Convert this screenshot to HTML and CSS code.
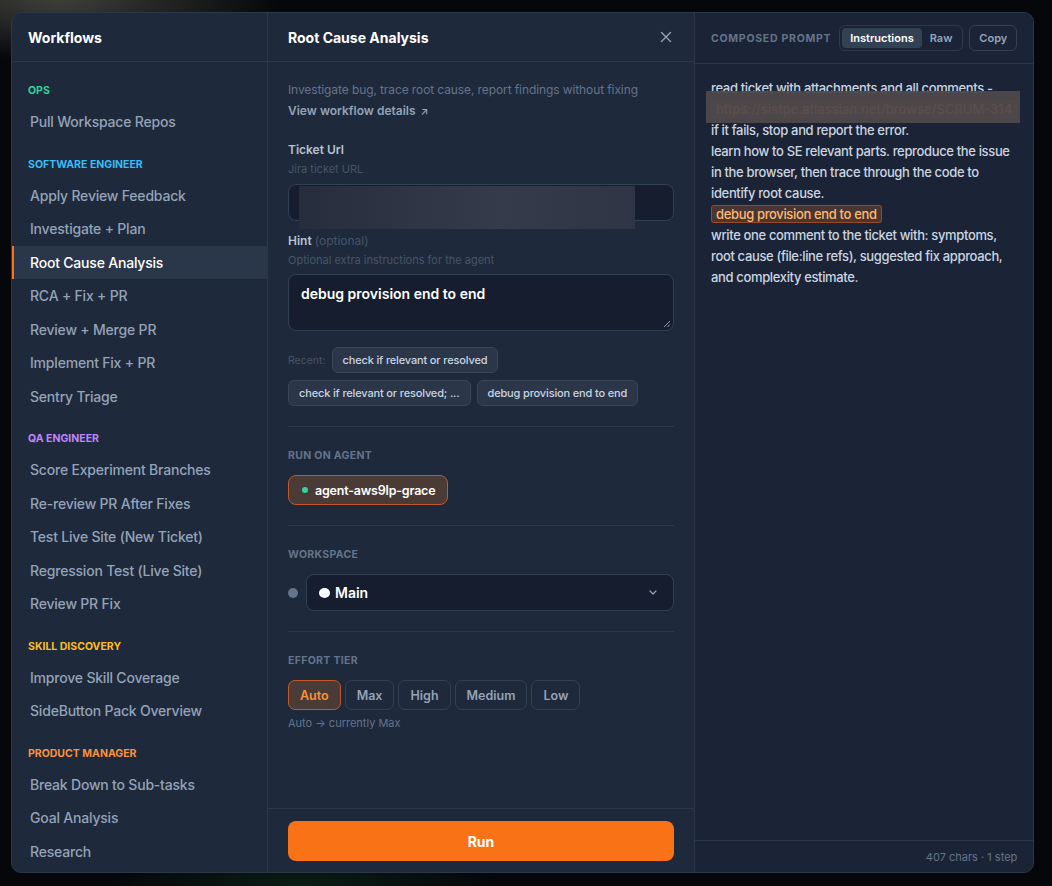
FILE: index.html
```html
<!DOCTYPE html>
<html lang="en">
<head>
    <meta charset="UTF-8">
    <meta name="viewport" content="width=device-width, initial-scale=1.0">
    <title>Workflows - Root Cause Analysis</title>
    <link rel="stylesheet" href="styles.css">
</head>
<body>

<div class="modal">

    <aside class="sidebar">
        <div class="sidebar-header">
            <h2>Workflows</h2>
        </div>
        <div class="sidebar-list">
            <div class="group">
                <div class="group-label ops">OPS</div>
                <div class="item">Pull Workspace Repos</div>
            </div>
            <div class="group">
                <div class="group-label swe">SOFTWARE ENGINEER</div>
                <div class="item">Apply Review Feedback</div>
                <div class="item">Investigate + Plan</div>
                <div class="item active">Root Cause Analysis</div>
                <div class="item">RCA + Fix + PR</div>
                <div class="item">Review + Merge PR</div>
                <div class="item">Implement Fix + PR</div>
                <div class="item">Sentry Triage</div>
            </div>
            <div class="group">
                <div class="group-label qa">QA ENGINEER</div>
                <div class="item">Score Experiment Branches</div>
                <div class="item">Re-review PR After Fixes</div>
                <div class="item">Test Live Site (New Ticket)</div>
                <div class="item">Regression Test (Live Site)</div>
                <div class="item">Review PR Fix</div>
            </div>
            <div class="group">
                <div class="group-label skill">SKILL DISCOVERY</div>
                <div class="item">Improve Skill Coverage</div>
                <div class="item">SideButton Pack Overview</div>
            </div>
            <div class="group">
                <div class="group-label pm">PRODUCT MANAGER</div>
                <div class="item">Break Down to Sub-tasks</div>
                <div class="item">Goal Analysis</div>
                <div class="item">Research</div>
            </div>
        </div>
    </aside>

    <main class="detail">
        <div class="detail-header">
            <h2>Root Cause Analysis</h2>
            <button class="close-btn" aria-label="Close">
                <svg width="12" height="12" viewBox="0 0 12 12"><path d="M1.5 1.5l9 9M10.5 1.5l-9 9" stroke="#94a3b8" stroke-width="1.4" stroke-linecap="round"/></svg>
            </button>
        </div>

        <div class="detail-body">
            <p class="desc">Investigate bug, trace root cause, report findings without fixing</p>
            <a class="details-link">View workflow details <span class="ext">↗</span></a>

            <div class="field">
                <div class="field-label">Ticket Url</div>
                <div class="field-help">Jira ticket URL</div>
                <div class="input">
                    <span class="redacted">https://sistpe.atlassian.net/browse/SCRUM-314</span>
                </div>
            </div>

            <div class="field">
                <div class="field-label">Hint <span class="optional">(optional)</span></div>
                <div class="field-help">Optional extra instructions for the agent</div>
                <div class="textarea">debug provision end to end
                    <svg class="grip" width="8" height="8" viewBox="0 0 8 8"><path d="M7 1L1 7M7 4.5L4.5 7" stroke="#94a3b8" stroke-width="1"/></svg>
                </div>
            </div>

            <div class="recent">
                <span class="recent-label">Recent:</span>
                <button class="chip">check if relevant or resolved</button>
                <button class="chip">check if relevant or resolved; ...</button>
                <button class="chip">debug provision end to end</button>
            </div>

            <div class="section">
                <div class="section-title">RUN ON AGENT</div>
                <button class="agent-chip"><span class="dot-green"></span>agent-aws9lp-grace</button>
            </div>

            <div class="section">
                <div class="section-title">WORKSPACE</div>
                <div class="workspace-row">
                    <span class="dot-gray"></span>
                    <div class="select">
                        <span class="dot-white"></span>
                        <span class="select-value">Main</span>
                        <svg class="chevron" width="8" height="5" viewBox="0 0 8 5"><path d="M1 1l3 3 3-3" fill="none" stroke="#94a3b8" stroke-width="1.2" stroke-linecap="round" stroke-linejoin="round"/></svg>
                    </div>
                </div>
            </div>

            <div class="section">
                <div class="section-title">EFFORT TIER</div>
                <div class="tiers">
                    <button class="tier active">Auto</button>
                    <button class="tier">Max</button>
                    <button class="tier">High</button>
                    <button class="tier">Medium</button>
                    <button class="tier">Low</button>
                </div>
                <div class="tier-note">Auto → currently Max</div>
            </div>
        </div>

        <div class="detail-footer">
            <button class="run-btn">Run</button>
        </div>
    </main>

    <section class="prompt">
        <div class="prompt-header">
            <span class="prompt-title">COMPOSED PROMPT</span>
            <div class="prompt-actions">
                <div class="toggle">
                    <button class="toggle-btn active">Instructions</button>
                    <button class="toggle-btn">Raw</button>
                </div>
                <button class="copy-btn">Copy</button>
            </div>
        </div>
        <div class="prompt-body">read ticket with attachments and all comments -
<span class="var-chip link-chip">https://sistpe.atlassian.net/browse/SCRUM-314</span>
if it fails, stop and report the error.
learn how to SE relevant parts. reproduce the issue in the browser, then trace through the code to identify root cause.
<span class="var-chip">debug provision end to end</span>
write one comment to the ticket with: symptoms, root cause (file:line refs), suggested fix approach, and complexity estimate.</div>
        <div class="prompt-footer">407 chars · 1 step</div>
    </section>

</div>

</body>
</html>
```

FILE: styles.css
```css
/* Ciemny motyw modala z workflowami */
body {
    margin: 0;
    height: 886px;
    overflow: hidden;
    font-family: 'Inter', 'Noto Sans', sans-serif;
    background-color: #05070a;
    background-image:
        radial-gradient(ellipse 220px 60px at 60px 0px, rgba(110, 108, 96, 0.55), transparent),
        radial-gradient(ellipse 200px 40px at 300px 886px, rgba(20, 70, 40, 0.35), transparent);
    color: #cbd5e1;
}

button {
    font-family: inherit;
    cursor: pointer;
}

.modal {
    margin: 12px 0 0 11px;
    width: 1023px;
    height: 861px;
    box-sizing: border-box;
    display: flex;
    background-color: #1e293b;
    border: 1px solid #2c3749;
    border-radius: 10px;
    overflow: hidden;
}

/* Lewa kolumna */
.sidebar {
    width: 256px;
    flex-shrink: 0;
    box-sizing: border-box;
    border-right: 1px solid #2c3749;
    display: flex;
    flex-direction: column;
}

.sidebar-header {
    height: 49px;
    box-sizing: border-box;
    border-bottom: 1px solid #2c3749;
    display: flex;
    align-items: center;
    padding-left: 16px;
}

.sidebar-header h2,
.detail-header h2 {
    margin: 0;
    font-size: 14px;
    font-weight: 700;
    color: #fff;
}

.sidebar-list {
    padding-top: 22px;
}

.group + .group {
    margin-top: 18.75px;
}

.group-label {
    padding-left: 16px;
    font-size: 10.5px;
    line-height: 14px;
    font-weight: 700;
    margin-bottom: 7.25px;
}

.group-label.ops { color: #34d399; }
.group-label.swe { color: #38bdf8; }
.group-label.qa { color: #c084fc; }
.group-label.skill { color: #fbbf24; }
.group-label.pm { color: #fb923c; }

.item {
    padding: 8px 0 8px 16px;
    line-height: 17.5px;
    font-size: 14px;
    font-weight: 500;
    letter-spacing: -0.2px;
    color: #94a3b8;
    border-left: 2px solid transparent;
}

.item.active {
    background-color: #2a3649;
    border-left-color: #f97316;
    color: #fff;
}

/* Srodkowa kolumna */
.detail {
    width: 427px;
    flex-shrink: 0;
    box-sizing: border-box;
    border-right: 1px solid #2c3749;
    display: flex;
    flex-direction: column;
}

.detail-header {
    height: 49px;
    box-sizing: border-box;
    border-bottom: 1px solid #2c3749;
    display: flex;
    align-items: center;
    justify-content: space-between;
    padding: 0 20px;
}

.close-btn {
    background: none;
    border: none;
    padding: 0;
    margin-right: 2px;
    display: flex;
}

.detail-body {
    flex: 1;
    padding: 19px 20px 0;
}

.desc {
    margin: 0;
    font-size: 12px;
    line-height: 18px;
    letter-spacing: -0.1px;
    color: #64748b;
}

.details-link {
    display: block;
    margin-top: 3px;
    font-size: 12px;
    line-height: 18px;
    font-weight: 600;
    color: #94a3b8;
}

.details-link .ext {
    font-size: 10px;
    margin-left: 2px;
}

.field {
    margin-top: 21px;
}

.field + .field {
    margin-top: 11px;
}

.field-label {
    font-size: 12px;
    line-height: 18px;
    font-weight: 600;
    color: #b8c2d0;
}

.optional {
    font-weight: 400;
    color: #475569;
}

.field-help {
    margin-top: 3px;
    font-size: 11px;
    line-height: 14px;
    color: #475569;
}

.input {
    margin-top: 8px;
    height: 37px;
    box-sizing: border-box;
    background-color: #151d2e;
    border: 1px solid #334155;
    border-radius: 8px;
    padding: 0 10px;
    display: flex;
    align-items: center;
}

.redacted {
    position: relative;
    font-size: 14px;
    color: #64748b;
}

.redacted::after {
    content: '';
    position: absolute;
    left: 0;
    top: -8px;
    width: 336px;
    height: 43px;
    background: linear-gradient(90deg, #262d3c 0%, #2e3444 30%, #363b4b 60%, #2f3545 100%);
}

.textarea {
    position: relative;
    margin-top: 7px;
    height: 57px;
    box-sizing: border-box;
    background-color: #151d2e;
    border: 1px solid #334155;
    border-radius: 8px;
    padding: 9px 12px;
    font-size: 14px;
    line-height: 20px;
    font-weight: 600;
    color: #fff;
}

.grip {
    position: absolute;
    right: 2px;
    bottom: 2px;
}

.recent {
    margin-top: 16px;
    display: flex;
    flex-wrap: wrap;
    align-items: center;
    gap: 7px 6px;
}

.recent-label {
    font-size: 10.5px;
    color: #475569;
}

.chip {
    height: 26px;
    padding: 0 10px;
    background-color: #2b3749;
    border: 1px solid #3a4659;
    border-radius: 6px;
    font-size: 11px;
    font-weight: 500;
    letter-spacing: -0.15px;
    color: #cbd5e1;
}

.section {
    margin-top: 20px;
    border-top: 1px solid #2c3749;
    padding-top: 22px;
}

.section-title {
    font-size: 10.5px;
    line-height: 14px;
    font-weight: 700;
    letter-spacing: 0.03em;
    color: #64748b;
    margin-bottom: 12px;
}

.agent-chip {
    height: 30px;
    padding: 0 12px 0 13px;
    display: flex;
    align-items: center;
    gap: 7px;
    background-color: #4a3b36;
    border: 1px solid #c2592a;
    border-radius: 8px;
    font-size: 12.5px;
    font-weight: 600;
    letter-spacing: -0.2px;
    color: #fff;
}

.dot-green {
    width: 6px;
    height: 6px;
    border-radius: 50%;
    background-color: #34d399;
}

.workspace-row {
    display: flex;
    align-items: center;
    gap: 8px;
}

.dot-gray {
    width: 10px;
    height: 10px;
    border-radius: 50%;
    background-color: #64748b;
    flex-shrink: 0;
}

.select {
    flex: 1;
    height: 37px;
    box-sizing: border-box;
    background-color: #151d2e;
    border: 1px solid #334155;
    border-radius: 8px;
    display: flex;
    align-items: center;
    padding: 0 16px 0 12px;
}

.dot-white {
    width: 11px;
    height: 10px;
    border-radius: 50%;
    background-color: #fff;
    margin-right: 5px;
}

.select-value {
    flex: 1;
    font-size: 14px;
    font-weight: 600;
    color: #fff;
}

.tiers {
    display: flex;
    gap: 4px;
}

.tier {
    height: 30px;
    padding: 0 11px;
    background: none;
    border: 1px solid #334155;
    border-radius: 7px;
    font-size: 12.5px;
    font-weight: 600;
    color: #94a3b8;
}

.tier.active {
    background-color: #4a3b36;
    border-color: #c2592a;
    color: #fb923c;
}

.tier-note {
    margin-top: 6px;
    font-size: 11px;
    line-height: 14px;
    color: #64748b;
}

.detail-footer {
    border-top: 1px solid #2c3749;
    padding: 12px 20px 11px;
}

.run-btn {
    width: 100%;
    height: 40px;
    border: none;
    border-radius: 8px;
    background-color: #f97316;
    color: #fff;
    font-size: 14px;
    font-weight: 700;
}

/* Prawa kolumna */
.prompt {
    flex: 1;
    display: flex;
    flex-direction: column;
    background-color: #1b2436;
}

.prompt-header {
    height: 51px;
    box-sizing: border-box;
    border-bottom: 1px solid #2c3749;
    display: flex;
    align-items: center;
    justify-content: space-between;
    padding: 0 16px;
}

.prompt-title {
    font-size: 10.5px;
    font-weight: 700;
    letter-spacing: 0.07em;
    color: #64748b;
}

.prompt-actions {
    display: flex;
    gap: 6px;
}

.toggle {
    display: flex;
    padding: 2px;
    border: 1px solid #2d3a4e;
    border-radius: 6px;
}

.toggle-btn {
    height: 20px;
    padding: 0 8px;
    background: none;
    border: none;
    border-radius: 4px;
    font-size: 11px;
    font-weight: 600;
    color: #94a3b8;
}

.toggle-btn.active {
    background-color: #334155;
    color: #fff;
}

.copy-btn {
    height: 26px;
    padding: 0 9px;
    background: none;
    border: 1px solid #334155;
    border-radius: 6px;
    font-size: 11px;
    font-weight: 600;
    color: #94a3b8;
}

.prompt-body {
    flex: 1;
    padding: 14px 16px 13px;
    white-space: pre-wrap;
    font-size: 13px;
    line-height: 21px;
    font-weight: 500;
    letter-spacing: -0.35px;
    color: #cbd5e1;
}

.var-chip {
    padding: 0 4px;
    background-color: #4a3530;
    border: 1px solid #9a4b25;
    border-radius: 3px;
    color: #fdba74;
}

.link-chip {
    position: relative;
    white-space: nowrap;
    letter-spacing: 0;
}

.link-chip::after {
    content: '';
    position: absolute;
    left: -6px;
    width: 314px;
    top: -10px;
    bottom: -6px;
    background-color: rgba(78, 72, 74, 0.94);
}

.prompt-footer {
    height: 32px;
    box-sizing: border-box;
    border-top: 1px solid #2c3749;
    display: flex;
    align-items: center;
    justify-content: flex-end;
    padding: 0 16px;
    font-size: 11px;
    color: #64748b;
}
```
